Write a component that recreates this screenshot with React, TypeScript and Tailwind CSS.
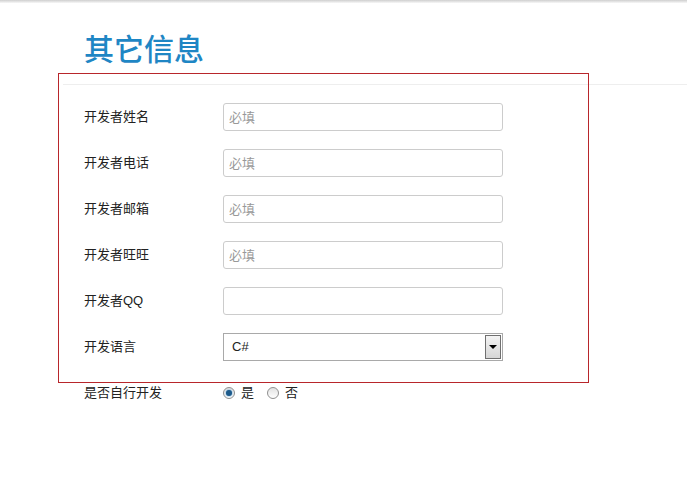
import React from "react";

const fieldFont = { fontFamily: '"Liberation Sans", "Noto Sans CJK SC", sans-serif' };

const textFields = [
  { label: "开发者姓名", placeholder: "必填" },
  { label: "开发者电话", placeholder: "必填" },
  { label: "开发者邮箱", placeholder: "必填" },
  { label: "开发者旺旺", placeholder: "必填" },
  { label: "开发者QQ", placeholder: "" },
];

function Radio({ checked, label }: { checked?: boolean; label: string }) {
  return (
    <label className="flex items-center gap-[6px]">
      <span className="flex h-[12px] w-[12px] items-center justify-center rounded-full border border-[#8f8f8f] bg-gradient-to-b from-[#e2e2e2] to-[#ffffff]">
        {checked && <span className="h-[6px] w-[6px] rounded-full bg-[#1d5a8a] shadow-[0_0_2px_#3b8fd0]" />}
      </span>
      <span className="text-[13px] text-[#222]">{label}</span>
    </label>
  );
}

export default function App() {
  return (
    <div className="relative min-h-[482px] w-[687px] bg-white" style={fieldFont}>
      <div className="h-[3px] bg-gradient-to-b from-[#cfcfcf] to-[#f7f7f7]" />

      <div className="mt-[30px] ml-[63px] border-b border-[#eeeeee] pb-[17px] pl-[21px]">
        <h2 className="text-[30px] font-medium leading-[34px] text-[#1f86c4]">其它信息</h2>
      </div>

      <div className="mt-[18px] flex flex-col gap-[18px] pl-[84px]">
        {textFields.map((f) => (
          <div key={f.label} className="flex h-[28px] items-center">
            <span className="w-[139px] text-[13px] text-[#222]">{f.label}</span>
            <input
              className="h-[28px] w-[280px] rounded-[3px] border border-[#cccccc] px-[5px] text-[13px] text-[#333] outline-none placeholder:text-[#999]"
              placeholder={f.placeholder}
            />
          </div>
        ))}

        <div className="flex h-[28px] items-center">
          <span className="w-[139px] text-[13px] text-[#222]">开发语言</span>
          <div className="flex h-[28px] w-[280px] items-center border border-[#a9a9a9] pl-[8px]">
            <span className="flex-1 text-[13px] text-[#222]">C#</span>
            <span className="mr-[1px] flex h-[24px] w-[16px] items-center justify-center border border-[#707070] bg-gradient-to-b from-[#f4f4f4] to-[#d6d6d6]">
              <span className="h-0 w-0 border-x-[4px] border-t-[4px] border-x-transparent border-t-black" />
            </span>
          </div>
        </div>

        <div className="mt-[4px] flex h-[20px] items-center">
          <span className="w-[139px] text-[13px] text-[#222]">是否自行开发</span>
          <div className="flex items-center gap-[13px]">
            <Radio checked label="是" />
            <Radio label="否" />
          </div>
        </div>
      </div>

      <div className="pointer-events-none absolute left-[58px] top-[73px] h-[310px] w-[531px] border border-[#b8262b]" />
    </div>
  );
}
